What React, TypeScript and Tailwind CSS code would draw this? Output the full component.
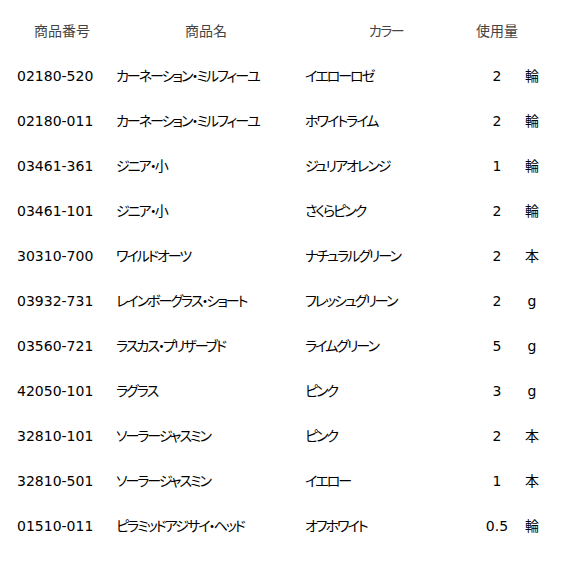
export default function App() {
  const rows = [
    { code: "02180-520", name: "カーネーション・ミルフィーユ", color: "イエローロゼ", qty: "2", unit: "輪" },
    { code: "02180-011", name: "カーネーション・ミルフィーユ", color: "ホワイトライム", qty: "2", unit: "輪" },
    { code: "03461-361", name: "ジニア・小", color: "ジュリアオレンジ", qty: "1", unit: "輪" },
    { code: "03461-101", name: "ジニア・小", color: "さくらピンク", qty: "2", unit: "輪" },
    { code: "30310-700", name: "ワイルドオーツ", color: "ナチュラルグリーン", qty: "2", unit: "本" },
    { code: "03932-731", name: "レインボーグラス・ショート", color: "フレッシュグリーン", qty: "2", unit: "g" },
    { code: "03560-721", name: "ラスカス・プリザーブド", color: "ライムグリーン", qty: "5", unit: "g" },
    { code: "42050-101", name: "ラグラス", color: "ピンク", qty: "3", unit: "g" },
    { code: "32810-101", name: "ソーラージャスミン", color: "ピンク", qty: "2", unit: "本" },
    { code: "32810-501", name: "ソーラージャスミン", color: "イエロー", qty: "1", unit: "本" },
    { code: "01510-011", name: "ピラミッドアジサイ・ヘッド", color: "オフホワイト", qty: "0.5", unit: "輪" },
  ];

  return (
    <div className="min-h-[565px] bg-white pt-[9px] pl-[8px] text-[14px] text-black font-['DejaVu_Sans','Noto_Sans_CJK_JP',sans-serif] [font-feature-settings:'palt']">
      {/* Header */}
      <div className="flex h-[45px] items-center text-[#444]">
        <div className="w-[108px] text-center">商品番号</div>
        <div className="w-[180px] text-center">商品名</div>
        <div className="w-[180px] text-center tracking-[-1.5px]">カラー</div>
        <div className="w-[42px] text-center whitespace-nowrap">使用量</div>
        <div className="w-[28px]" />
      </div>

      {/* Rows */}
      {rows.map((row, index) => (
        <div key={index} className="flex h-[45px] items-center">
          <div className="w-[108px] pl-[9px]">{row.code}</div>
          <div className="w-[180px] whitespace-nowrap tracking-[-2px]">{row.name}</div>
          <div className="w-[180px] pl-[9px] whitespace-nowrap tracking-[-2px]">{row.color}</div>
          <div className="w-[42px] text-center">{row.qty}</div>
          <div className="w-[28px] text-center">{row.unit}</div>
        </div>
      ))}
    </div>
  );
}
